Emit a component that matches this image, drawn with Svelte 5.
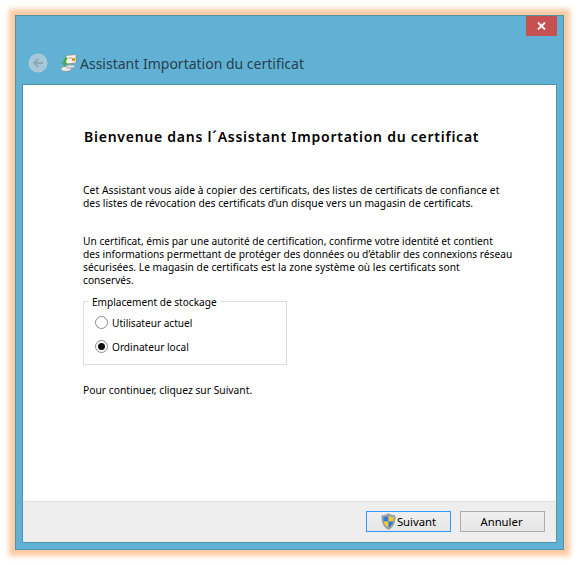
<script>
  const paragraphs = [
    ["Cet Assistant vous aide à copier des certificats, des listes de certificats de confiance et", "des listes de révocation des certificats d’un disque vers un magasin de certificats."],
    ["Un certificat, émis par une autorité de certification, confirme votre identité et contient", "des informations permettant de protéger des données ou d’établir des connexions réseau", "sécurisées. Le magasin de certificats est la zone système où les certificats sont", "conservés."]
  ];
</script>

<div class="page">
  <div class="window">
    <div class="controls">
      <div class="close">
        <svg width="9" height="8" viewBox="0 0 9 8"><path d="M1 0.5 L8 7.5 M8 0.5 L1 7.5" stroke="#fff" stroke-width="1.8" fill="none"/></svg>
      </div>
    </div>
    <div class="titlebar">
      <div class="back">
        <svg width="20" height="20" viewBox="0 0 20 20">
          <circle cx="10" cy="10" r="8.8" fill="#a5c8da" stroke="#b0c9d7" stroke-width="1.4"/>
          <path d="M15 10 H6.5 M10.5 5.8 L6 10 L10.5 14.2" stroke="#8fa9b8" stroke-width="2" fill="none"/>
        </svg>
      </div>
      <svg class="app-icon" width="17" height="18" viewBox="0 0 17 18">
        <path d="M6 1.5 L16 0.5 L16 9 L6 10 Z" fill="#f4f1e6" stroke="#8a8f8c" stroke-width="0.7"/>
        <rect x="12" y="4" width="3" height="3" fill="#e09a20"/>
        <rect x="8" y="3.5" width="4" height="1" fill="#a8a8a0"/>
        <path d="M6.5 3 C4 4 3 6 3.5 9 L1.5 9 L4.5 12 L7.5 9 L5.5 9 C5.3 7 6 6 7.5 5.5 Z" fill="#3fae3c"/>
        <ellipse cx="6" cy="15" rx="5.5" ry="2.4" fill="#e8ecec" stroke="#7f8a8c" stroke-width="0.7"/>
        <ellipse cx="10.5" cy="12.5" rx="4.5" ry="1.7" fill="#dfe5e5" stroke="#7f8a8c" stroke-width="0.7"/>
      </svg>
      <span class="title">Assistant Importation du certificat</span>
    </div>
    <div class="panel">
      <div class="content">
        <h1>Bienvenue dans l´Assistant Importation du certificat</h1>
        {#each paragraphs as lines}
          <p>
            {#each lines as line}
              <span class="line">{line}</span>
            {/each}
          </p>
        {/each}
        <fieldset>
          <legend>Emplacement de stockage</legend>
          <label class="radio">
            <span class="dot"></span>
            Utilisateur actuel
          </label>
          <label class="radio">
            <span class="dot checked"></span>
            Ordinateur local
          </label>
        </fieldset>
        <p class="next">Pour continuer, cliquez sur Suivant.</p>
      </div>
      <div class="footer">
        <button class="primary">
          <svg width="15" height="17" viewBox="0 0 15 17">
            <path d="M7.5 0.5 C9.5 2 11.5 2.5 14 2.5 C14.5 9 12.5 14 7.5 16.5 C2.5 14 0.5 9 1 2.5 C3.5 2.5 5.5 2 7.5 0.5 Z" fill="#9aa3ab" stroke="#8b949c" stroke-width="0.6"/>
            <path d="M7.5 2.5 L7.5 8.5 L2.7 8.5 C2.5 7 2.5 5.5 2.6 4 C4.5 4 6 3.5 7.5 2.5 Z" fill="#2f7fd6"/>
            <path d="M7.5 2.5 C9 3.5 10.5 4 12.4 4 C12.5 5.5 12.5 7 12.3 8.5 L7.5 8.5 Z" fill="#f4c92f"/>
            <path d="M2.7 8.5 L7.5 8.5 L7.5 14.6 C5 13.2 3.3 11.3 2.7 8.5 Z" fill="#f4c92f"/>
            <path d="M7.5 8.5 L12.3 8.5 C11.7 11.3 10 13.2 7.5 14.6 Z" fill="#2f7fd6"/>
          </svg>
          <span>Suivant</span>
        </button>
        <button class="cancel">Annuler</button>
      </div>
    </div>
  </div>
</div>

<style>
  :global(body) {
    margin: 0;
    background: #fff;
  }
  .page {
    width: 579px;
    height: 565px;
    padding: 15px;
    box-sizing: border-box;
    overflow: hidden;
    font-family: "Noto Sans", "Open Sans", sans-serif;
    color: #000;
  }
  .window {
    width: 549px;
    height: 535px;
    box-sizing: border-box;
    background: #60b1d4;
    border: 1px solid #4f94ad;
    box-shadow: 0 0 5px 6px #fecaa4;
    padding: 0 6px 6px 6px;
    display: flex;
    flex-direction: column;
  }
  .controls {
    display: flex;
    justify-content: flex-end;
    height: 20px;
    flex: none;
  }
  .close {
    width: 31px;
    height: 20px;
    background: #c75050;
    display: flex;
    align-items: center;
    justify-content: center;
  }
  .titlebar {
    height: 48px;
    flex: none;
    display: flex;
    align-items: center;
    padding-top: 6px;
    box-sizing: border-box;
  }
  .back {
    width: 20px;
    height: 20px;
    margin-left: 6px;
    display: flex;
  }
  .app-icon {
    margin-left: 12px;
  }
  .title {
    margin-left: 3px;
    font-size: 14px;
    color: #2a3f4c;
    white-space: nowrap;
  }
  .panel {
    flex: 1;
    min-height: 0;
    background: #fff;
    border: 1px solid #4f94ad;
    display: flex;
    flex-direction: column;
  }
  .content {
    flex: 1;
    min-height: 0;
    padding: 43px 0 0 60px;
    font-size: 10.2px;
  }
  h1 {
    margin: 0 0 38px 0;
    padding-left: 1px;
    font-size: 14px;
    line-height: 18px;
    font-weight: 600;
    letter-spacing: 0.75px;
    white-space: nowrap;
  }
  p {
    margin: 0 0 25px 0;
    line-height: 13px;
  }
  p + p {
    margin-bottom: 20px;
  }
  p:first-of-type {
    font-size: 10.3px;
  }
  p:first-of-type .line:first-child {
    letter-spacing: 0.045px;
  }
  p + p .line:nth-child(3) {
    letter-spacing: 0.04px;
  }
  .line {
    display: block;
    white-space: nowrap;
  }
  fieldset {
    margin: -12px 0 0 0;
    padding: 0;
    width: 204px;
    height: 70px;
    box-sizing: border-box;
    border: 1px solid #dcdcdc;
  }
  legend {
    margin-left: 4px;
    padding: 0 3px 0 4px;
    line-height: 13px;
    font-size: 10.1px;
    position: relative;
    top: 1px;
  }
  .radio {
    display: flex;
    align-items: center;
    gap: 4px;
    height: 13px;
    margin: 8px 0 11px 11px;
    font-size: 10.1px;
    white-space: nowrap;
  }
  .dot {
    width: 11px;
    height: 11px;
    border: 1px solid #8a8a8a;
    border-radius: 50%;
    background: #fff;
    position: relative;
    flex: none;
  }
  .dot.checked::after {
    content: "";
    position: absolute;
    inset: 2px;
    border-radius: 50%;
    background: #111;
  }
  p.next {
    margin: 19px 0 0 0;
    font-size: 10.3px;
  }
  .footer {
    height: 41px;
    flex: none;
    box-sizing: border-box;
    background: #eeeeee;
    border-top: 1px solid #dddddd;
    display: flex;
    justify-content: flex-end;
    align-items: center;
    gap: 9px;
    padding: 0 11px 1px 0;
  }
  button {
    width: 85px;
    height: 21px;
    box-sizing: border-box;
    border: 1px solid #acacac;
    background: linear-gradient(#f0f0f0, #e5e5e5);
    font-family: inherit;
    font-size: 11.3px;
    color: #000;
    padding: 0;
    display: flex;
    align-items: center;
    justify-content: center;
    gap: 1px;
  }
  button.primary {
    border-color: #3399ff;
  }
  button.cancel {
    padding-right: 2px;
  }
</style>
